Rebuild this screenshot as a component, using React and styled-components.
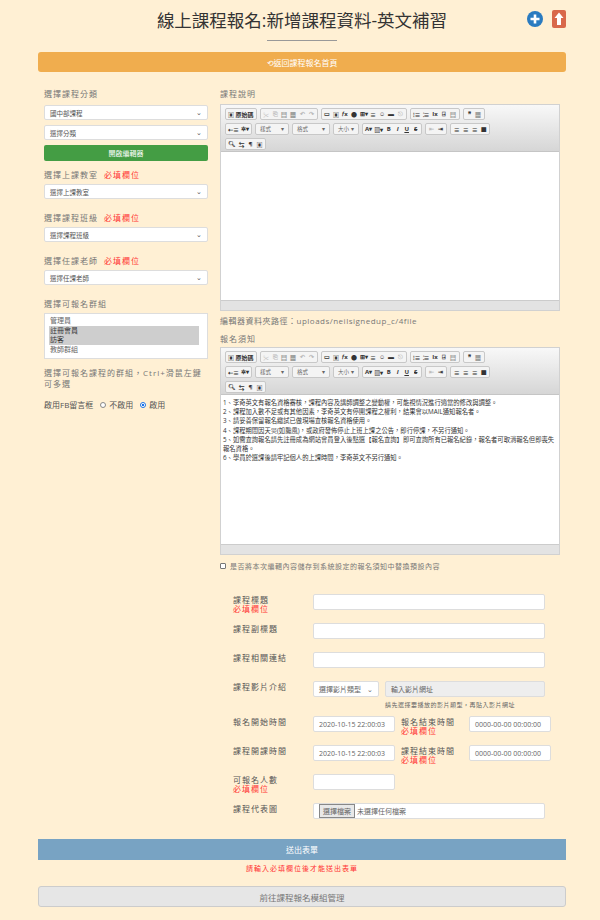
import React from "react";
import styled, { createGlobalStyle } from "styled-components";

const G = createGlobalStyle`
  body{margin:0;background:#fff0d4;font-family:"Open Sans","Noto Sans CJK TC",sans-serif;color:#555;}
  *{box-sizing:border-box;}
`;
const Page = styled.div`width:600px;padding:0 34px 0 38px;`;
const Header = styled.div`position:relative;height:52px;display:flex;flex-direction:column;align-items:center;padding-top:7px;`;
const Title = styled.h1`margin:0;font-weight:400;font-size:17.5px;letter-spacing:0;color:#333;line-height:26px;`;
const Rule = styled.div`width:70px;height:1px;background:#999;margin-top:7px;`;
const Icons = styled.div`position:absolute;right:0;top:10px;display:flex;gap:9px;align-items:center;`;
const Orange = styled.div`height:20px;background:#f0ad4e;border-radius:3px;color:#fff;font-size:8px;display:flex;align-items:center;justify-content:center;`;
const Main = styled.div`display:flex;gap:12px;margin-top:12px;`;
const Left = styled.div`width:170px;padding-left:6px;display:flex;flex-direction:column;`;
const Right = styled.div`flex:1;padding-right:6px;display:flex;flex-direction:column;`;
const Label = styled.div`font-size:8px;letter-spacing:1px;color:#777;margin:${p=>p.m||"0 0 4px"};line-height:11px;`;
const Req = styled.span`color:#f33;margin-left:6px;`;
const Sel = styled.div`height:15px;background:#fff;border:1px solid #ddd;border-radius:2px;font-size:6.5px;color:#555;padding:0 5px;display:flex;align-items:center;justify-content:space-between;margin-bottom:${p=>p.mb||"5px"};`;
const Green = styled.div`height:16px;background:#449d44;color:#fff;font-size:7px;display:flex;align-items:center;justify-content:center;border-radius:2px;margin-bottom:8px;`;
const ListBox = styled.div`height:46px;background:#fff;border:1px solid #ddd;font-size:7px;padding:2px 8px 0 4px;line-height:9.5px;margin-bottom:8px;`;
const Opt = styled.div`background:${p=>p.on?"#cecece":"transparent"};color:${p=>p.on?"#333":"#666"};padding-left:1px;`;
const Radio = styled.div`font-size:8px;color:#555;display:flex;align-items:center;gap:3px;margin-top:10px;`;
const Dot = styled.span`width:6px;height:6px;border-radius:50%;border:1px solid ${p=>p.on?"#1a73e8":"#888"};background:${p=>p.on?"radial-gradient(#1a73e8 45%,#fff 55%)":"#fff"};margin-left:4px;`;
const Editor = styled.div`border:1px solid #d1d1d1;background:#fff;height:${p=>p.h}px;display:flex;flex-direction:column;`;
const Toolbar = styled.div`background:linear-gradient(#f8f8f8,#d6d6d6);padding:3px 4px 1px;display:flex;flex-direction:column;gap:3px;border-bottom:1px solid #c5c5c5;`;
const TRow = styled.div`display:flex;gap:3px;`;
const Group = styled.div`display:flex;align-items:center;border:1px solid #c8c8c8;border-radius:2px;background:#f4f4f4;height:12px;padding:0 1px;`;
const TB = styled.span`font-size:6px;color:${p=>p.dim?"#bbb":"#333"};min-width:9px;text-align:center;font-weight:700;padding:0 1px;`;
const Combo = styled.span`font-size:5.5px;color:#666;width:${p=>p.w}px;display:flex;justify-content:space-between;padding:0 3px;`;
const EBody = styled.div`flex:1;font-size:6.3px;line-height:9.2px;color:#333;padding:3px 2px;`;
const EFoot = styled.div`height:10px;background:#e3e3e3;border-top:1px solid #ccc;`;
const Path = styled.div`font-size:8px;color:#777;margin:4px 0 6px;letter-spacing:.5px;line-height:12px;`;
const Check = styled.div`font-size:7px;color:#777;display:flex;gap:4px;align-items:center;margin-top:6px;letter-spacing:.5px;`;
const Box = styled.span`width:6px;height:6px;border:1px solid #777;border-radius:1px;background:#fff;`;
const Form = styled.div`padding:23px 15px 0 195px;display:flex;flex-direction:column;`;
const FRow = styled.div`display:grid;grid-template-columns:80px 1fr;min-height:${p=>p.h||29}px;`;
const FL = styled.div`font-size:8px;letter-spacing:1px;color:#555;line-height:9px;padding-top:1px;`;
const Red = styled.div`color:#f33;`;
const Input = styled.div`height:16px;background:${p=>p.gray?"#eee":"#fff"};border:1px solid #ddd;border-radius:2px;width:${p=>p.w||"232px"};font-size:7px;color:#666;padding:0 5px;display:flex;align-items:center;white-space:nowrap;overflow:hidden;`;
const Inline = styled.div`display:flex;gap:6px;align-items:flex-start;`;
const Hint = styled.div`font-size:6px;color:#666;margin:3px 0 0 72px;letter-spacing:.5px;`;
const FileBtn = styled.span`border:1px solid #888;background:#e8e8e8;font-size:7px;padding:1px 3px;margin-right:2px;`;
const Submit = styled.div`height:21px;background:#78a3c3;color:#fff;font-size:8px;display:flex;align-items:center;justify-content:center;margin-top:7px;`;
const ErrText = styled.div`color:#f33;font-size:7px;text-align:center;margin:4px 0 0;letter-spacing:1px;line-height:10px;`;
const GrayBtn = styled.div`height:21px;background:#e6e6e6;border:1px solid #ccc;border-radius:3px;color:#777;font-size:8.5px;display:flex;align-items:center;justify-content:center;margin-top:12px;`;

const Toolbars = () => (
  <Toolbar>
    <TRow>
      <Group><TB>▣ 原始碼</TB></Group>
      <Group><TB dim>✂</TB><TB dim>⎘</TB><TB>▤</TB><TB>▦</TB><TB dim>↶</TB><TB dim>↷</TB></Group>
      <Group><TB>▭</TB><TB>▣</TB><TB>𝑓x</TB><TB>●</TB><TB>⊞▾</TB><TB>≡</TB><TB>☺</TB><TB>▬</TB><TB dim>⎋</TB></Group>
      <Group><TB>⁝≡</TB><TB>⁚≡</TB><TB>Ix</TB><TB>⍈</TB><TB>▤</TB></Group>
      <Group><TB>❞</TB><TB>▦</TB></Group>
    </TRow>
    <TRow>
      <Group><TB>⇠≡</TB><TB>✲▾</TB></Group>
      <Group><Combo w={30}><span>樣式</span><span>▾</span></Combo></Group>
      <Group><Combo w={34}><span>格式</span><span>▾</span></Combo></Group>
      <Group><Combo w={22}><span>大小</span><span>▾</span></Combo></Group>
      <Group><TB>A▾</TB><TB>▧▾</TB><TB>B</TB><TB><i>I</i></TB><TB><u>U</u></TB><TB><s>S</s></TB></Group>
      <Group><TB dim>⇤</TB><TB>⇥</TB></Group>
      <Group><TB>≡</TB><TB>≡</TB><TB>≡</TB><TB>■</TB></Group>
    </TRow>
    <TRow>
      <Group><TB>🔍︎</TB><TB>⇆</TB><TB>¶</TB><TB>▣</TB></Group>
    </TRow>
  </Toolbar>
);

export default function App(){
  return <Page><G/>
    <Header>
      <Title>線上課程報名:新增課程資料-英文補習</Title>
      <Rule/>
      <Icons>
        <svg width="16" height="16" viewBox="0 0 16 16"><circle cx="8" cy="8" r="8" fill="#2a7bc0"/><path d="M8 3.5v9M3.5 8h9" stroke="#fff" strokeWidth="2.6"/></svg>
        <svg width="14" height="18" viewBox="0 0 14 18"><rect width="14" height="18" rx="2" fill="#d9684a"/><path d="M7 2.5L2.5 8H5v7h4V8h2.5z" fill="#fff"/></svg>
      </Icons>
    </Header>
    <Orange>⟲返回課程報名首頁</Orange>
    <Main>
      <Left>
        <Label m="4px 0 6px">選擇課程分類</Label>
        <Sel>國中部課程<span>⌄</span></Sel>
        <Sel>選擇分類<span>⌄</span></Sel>
        <Green>開啟編輯器</Green>
        <Label>選擇上課教室<Req>必填欄位</Req></Label>
        <Sel mb="13px">選擇上課教室<span>⌄</span></Sel>
        <Label>選擇課程班級<Req>必填欄位</Req></Label>
        <Sel mb="13px">選擇課程班級<span>⌄</span></Sel>
        <Label>選擇任課老師<Req>必填欄位</Req></Label>
        <Sel mb="13px">選擇任課老師<span>⌄</span></Sel>
        <Label>選擇可報名群組</Label>
        <ListBox><Opt>管理員</Opt><Opt on>註冊會員</Opt><Opt on>訪客</Opt><Opt>教師群組</Opt></ListBox>
        <Label m="0">選擇可報名課程的群組，Ctrl+滑鼠左鍵可多選</Label>
        <Radio>啟用FB留言框<Dot/>不啟用<Dot on/>啟用</Radio>
      </Left>
      <Right>
        <Label m="4px 0 5px">課程說明</Label>
        <Editor h={207}><Toolbars/><EBody/><EFoot/></Editor>
        <Path>編輯器資料夾路徑：uploads/neilsignedup_c/4file</Path>
        <Label m="0 0 3px">報名須知</Label>
        <Editor h={208}><Toolbars/><EBody>
          1、李奇英文有報名資格審核，課程內容及講師調整之變動權，可能視情況進行適當的修改與調整。<br/>
          2、課程加入數不足或有其他因素，李奇英文有停開課程之權利，結果會以MAIL通知報名者。<br/>
          3、請妥善保留報名繳試已做現場查核報名資格使用。<br/>
          4、課程期間因天災(如颱風)，或政府發佈停止上班上課之公告，即行停課，不另行通知。<br/>
          5、如需查詢報名請先註冊成為網站會員登入後點選【報名查詢】即可查詢所有已報名紀錄，報名者可取消報名但即喪失報名資格。<br/>
          6、學員於選課後請牢記個人的上課時間，李奇英文不另行通知。
        </EBody><EFoot/></Editor>
        <Check><Box/>是否將本次編輯內容儲存到系統設定的報名須知中替換預設內容</Check>
      </Right>
    </Main>
    <Form>
      <FRow><FL>課程標題<Red>必填欄位</Red></FL><Input/></FRow>
      <FRow><FL>課程副標題</FL><Input/></FRow>
      <FRow><FL>課程相關連結</FL><Input/></FRow>
      <FRow h={35}><FL>課程影片介紹</FL><div><Inline><Input w="66px">選擇影片類型<span style={{marginLeft:"auto"}}>⌄</span></Input><Input gray w="160px">輸入影片網址</Input></Inline><Hint>請先選擇要播放的影片類型，再貼入影片網址</Hint></div></FRow>
      <FRow><FL>報名開始時間</FL><Inline><Input w="82px">2020-10-15 22:00:03</Input><FL style={{width:62}}>報名結束時間<Red>必填欄位</Red></FL><Input w="82px">0000-00-00 00:00:00</Input></Inline></FRow>
      <FRow><FL>課程開課時間</FL><Inline><Input w="82px">2020-10-15 22:00:03</Input><FL style={{width:62}}>課程結束時間<Red>必填欄位</Red></FL><Input w="82px">0000-00-00 00:00:00</Input></Inline></FRow>
      <FRow><FL>可報名人數<Red>必填欄位</Red></FL><Input w="82px"/></FRow>
      <FRow><FL>課程代表圖</FL><Input><FileBtn>選擇檔案</FileBtn>未選擇任何檔案</Input></FRow>
    </Form>
    <Submit>送出表單</Submit>
    <ErrText>請輸入必填欄位後才能送出表單</ErrText>
    <GrayBtn>前往課程報名模組管理</GrayBtn>
  </Page>;
}
